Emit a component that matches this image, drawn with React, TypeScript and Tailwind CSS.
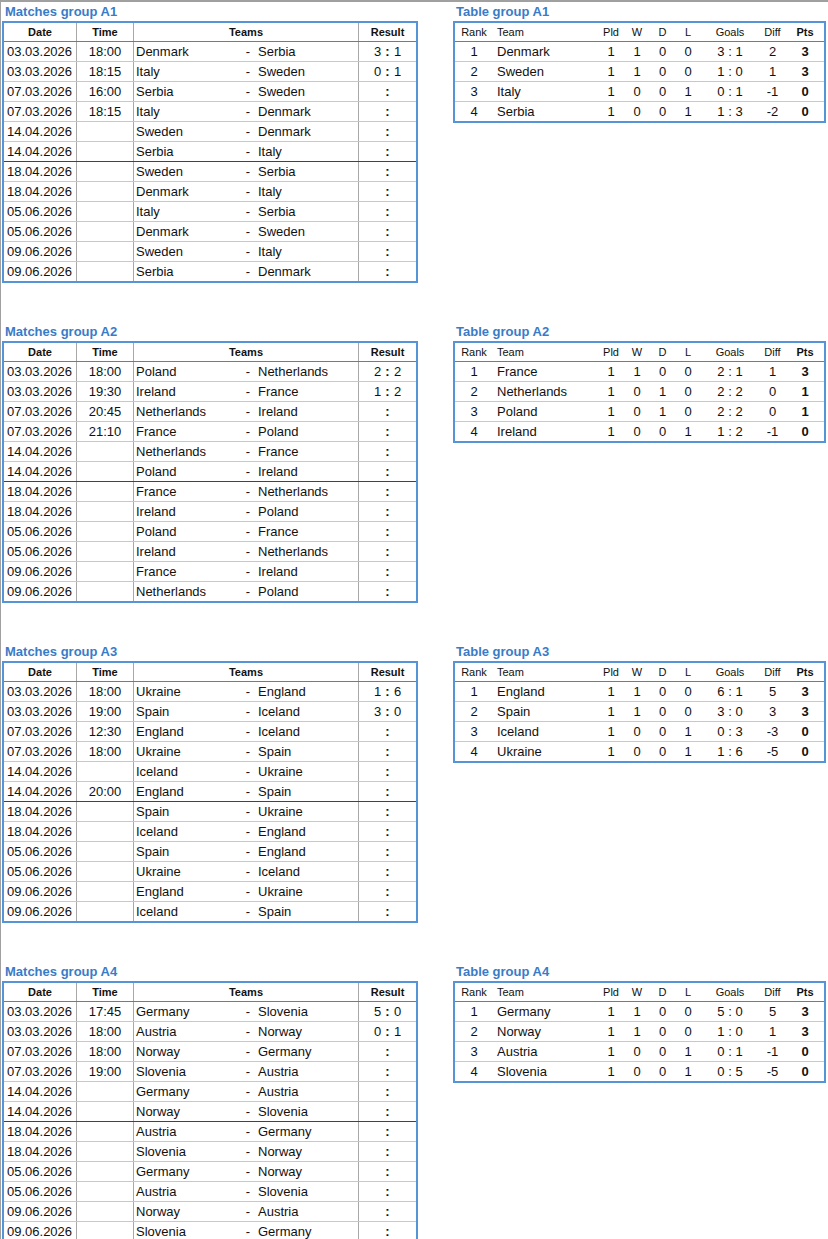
import React from "react";

type Match = [string, string, string, string, string];
type Standing = [number, string, number, number, number, number, string, number, number];

type Group = {
  name: string;
  matches: Match[];
  table: Standing[];
};

const groups: Group[] = [
  {
    name: "A1",
    matches: [
      ["03.03.2026", "18:00", "Denmark", "Serbia", "3:1"],
      ["03.03.2026", "18:15", "Italy", "Sweden", "0:1"],
      ["07.03.2026", "16:00", "Serbia", "Sweden", ""],
      ["07.03.2026", "18:15", "Italy", "Denmark", ""],
      ["14.04.2026", "", "Sweden", "Denmark", ""],
      ["14.04.2026", "", "Serbia", "Italy", ""],
      ["18.04.2026", "", "Sweden", "Serbia", ""],
      ["18.04.2026", "", "Denmark", "Italy", ""],
      ["05.06.2026", "", "Italy", "Serbia", ""],
      ["05.06.2026", "", "Denmark", "Sweden", ""],
      ["09.06.2026", "", "Sweden", "Italy", ""],
      ["09.06.2026", "", "Serbia", "Denmark", ""],
    ],
    table: [
      [1, "Denmark", 1, 1, 0, 0, "3 : 1", 2, 3],
      [2, "Sweden", 1, 1, 0, 0, "1 : 0", 1, 3],
      [3, "Italy", 1, 0, 0, 1, "0 : 1", -1, 0],
      [4, "Serbia", 1, 0, 0, 1, "1 : 3", -2, 0],
    ],
  },
  {
    name: "A2",
    matches: [
      ["03.03.2026", "18:00", "Poland", "Netherlands", "2:2"],
      ["03.03.2026", "19:30", "Ireland", "France", "1:2"],
      ["07.03.2026", "20:45", "Netherlands", "Ireland", ""],
      ["07.03.2026", "21:10", "France", "Poland", ""],
      ["14.04.2026", "", "Netherlands", "France", ""],
      ["14.04.2026", "", "Poland", "Ireland", ""],
      ["18.04.2026", "", "France", "Netherlands", ""],
      ["18.04.2026", "", "Ireland", "Poland", ""],
      ["05.06.2026", "", "Poland", "France", ""],
      ["05.06.2026", "", "Ireland", "Netherlands", ""],
      ["09.06.2026", "", "France", "Ireland", ""],
      ["09.06.2026", "", "Netherlands", "Poland", ""],
    ],
    table: [
      [1, "France", 1, 1, 0, 0, "2 : 1", 1, 3],
      [2, "Netherlands", 1, 0, 1, 0, "2 : 2", 0, 1],
      [3, "Poland", 1, 0, 1, 0, "2 : 2", 0, 1],
      [4, "Ireland", 1, 0, 0, 1, "1 : 2", -1, 0],
    ],
  },
  {
    name: "A3",
    matches: [
      ["03.03.2026", "18:00", "Ukraine", "England", "1:6"],
      ["03.03.2026", "19:00", "Spain", "Iceland", "3:0"],
      ["07.03.2026", "12:30", "England", "Iceland", ""],
      ["07.03.2026", "18:00", "Ukraine", "Spain", ""],
      ["14.04.2026", "", "Iceland", "Ukraine", ""],
      ["14.04.2026", "20:00", "England", "Spain", ""],
      ["18.04.2026", "", "Spain", "Ukraine", ""],
      ["18.04.2026", "", "Iceland", "England", ""],
      ["05.06.2026", "", "Spain", "England", ""],
      ["05.06.2026", "", "Ukraine", "Iceland", ""],
      ["09.06.2026", "", "England", "Ukraine", ""],
      ["09.06.2026", "", "Iceland", "Spain", ""],
    ],
    table: [
      [1, "England", 1, 1, 0, 0, "6 : 1", 5, 3],
      [2, "Spain", 1, 1, 0, 0, "3 : 0", 3, 3],
      [3, "Iceland", 1, 0, 0, 1, "0 : 3", -3, 0],
      [4, "Ukraine", 1, 0, 0, 1, "1 : 6", -5, 0],
    ],
  },
  {
    name: "A4",
    matches: [
      ["03.03.2026", "17:45", "Germany", "Slovenia", "5:0"],
      ["03.03.2026", "18:00", "Austria", "Norway", "0:1"],
      ["07.03.2026", "18:00", "Norway", "Germany", ""],
      ["07.03.2026", "19:00", "Slovenia", "Austria", ""],
      ["14.04.2026", "", "Germany", "Austria", ""],
      ["14.04.2026", "", "Norway", "Slovenia", ""],
      ["18.04.2026", "", "Austria", "Germany", ""],
      ["18.04.2026", "", "Slovenia", "Norway", ""],
      ["05.06.2026", "", "Germany", "Norway", ""],
      ["05.06.2026", "", "Austria", "Slovenia", ""],
      ["09.06.2026", "", "Norway", "Austria", ""],
      ["09.06.2026", "", "Slovenia", "Germany", ""],
    ],
    table: [
      [1, "Germany", 1, 1, 0, 0, "5 : 0", 5, 3],
      [2, "Norway", 1, 1, 0, 0, "1 : 0", 1, 3],
      [3, "Austria", 1, 0, 0, 1, "0 : 1", -1, 0],
      [4, "Slovenia", 1, 0, 0, 1, "0 : 5", -5, 0],
    ],
  },
];

function MatchRow({ m, border }: { m: Match; border: boolean }) {
  const [h, a] = m[4] ? m[4].split(":") : ["", ""];
  return (
    <div
      className={`grid grid-cols-[73px_57px_225px_57px] text-[13px] leading-[19px] ${
        border ? "h-5 border-b border-[#c8c8c8]" : "h-[19px]"
      }`}
    >
      <div className="border-r border-[#a8a8a8] pl-[3px]">{m[0]}</div>
      <div className="border-r border-[#a8a8a8] text-center">{m[1]}</div>
      <div className="flex border-r border-[#a8a8a8] pl-[2px]">
        <span className="w-[108px]">{m[2]}</span>
        <span className="w-[8px] text-center">-</span>
        <span className="ml-[6px]">{m[3]}</span>
      </div>
      <div className="flex justify-center">
        <span className="w-[14px] text-center">{h}</span>
        <span className="w-[6px] text-center font-bold">:</span>
        <span className="w-[14px] text-center">{a}</span>
      </div>
    </div>
  );
}

function Matches({ group }: { group: Group }) {
  const first = group.matches.slice(0, 6);
  const second = group.matches.slice(6);
  return (
    <div className="w-[416px] shrink-0">
      <div className="h-[19px] pl-[3px] text-[13px] font-bold leading-[19px] text-[#3a7bc8]">
        Matches group {group.name}
      </div>
      <div className="border-2 border-[#5594d6]">
        <div className="grid h-[19px] grid-cols-[73px_57px_225px_57px] border-b border-[#7a7a7a] text-[11px] font-bold leading-[18px]">
          <div className="border-r border-[#a8a8a8] text-center">Date</div>
          <div className="border-r border-[#a8a8a8] text-center">Time</div>
          <div className="border-r border-[#a8a8a8] text-center">Teams</div>
          <div className="text-center">Result</div>
        </div>
        {first.map((m, i) => (
          <MatchRow key={i} m={m} border={i < first.length - 1} />
        ))}
        <div className="h-px bg-[#e00000]" />
        {second.map((m, i) => (
          <MatchRow key={i} m={m} border={i < second.length - 1} />
        ))}
      </div>
    </div>
  );
}

const cols = "grid-cols-[38px_105px_26px_26px_25px_26px_58px_27px_38px]";

function Standings({ group }: { group: Group }) {
  return (
    <div className="w-[373px] shrink-0">
      <div className="h-[19px] pl-[3px] text-[13px] font-bold leading-[19px] text-[#3a7bc8]">
        Table group {group.name}
      </div>
      <div className="border-2 border-[#5594d6]">
        <div className={`grid ${cols} h-[19px] border-b border-[#7a7a7a] text-[11px] leading-[18px]`}>
          <div className="text-center">Rank</div>
          <div className="pl-[4px]">Team</div>
          <div className="text-center">Pld</div>
          <div className="text-center">W</div>
          <div className="text-center">D</div>
          <div className="text-center">L</div>
          <div className="text-center">Goals</div>
          <div className="text-center">Diff</div>
          <div className="text-center font-bold">Pts</div>
        </div>
        {group.table.map((r, i) => {
          const last = i === group.table.length - 1;
          return (
            <div
              key={i}
              className={`grid ${cols} text-[13px] leading-[20px] ${last ? "h-[19px]" : "h-5 border-b border-[#c8c8c8]"}`}
            >
              <div className="text-center">{r[0]}</div>
              <div className="pl-[4px]">{r[1]}</div>
              <div className="text-center">{r[2]}</div>
              <div className="text-center">{r[3]}</div>
              <div className="text-center">{r[4]}</div>
              <div className="text-center">{r[5]}</div>
              <div className="text-center">{r[6]}</div>
              <div className="text-center">{r[7]}</div>
              <div className="text-center font-bold">{r[8]}</div>
            </div>
          );
        })}
      </div>
    </div>
  );
}

export default function App() {
  return (
    <div
      className="min-h-[1239px] w-[828px] overflow-hidden border-l border-t-2 border-[#a0a0a0] bg-white pl-[1px] text-[#111]"
      style={{ fontFamily: '"Liberation Sans", Arial, sans-serif' }}
    >
      {groups.map((g) => (
        <div key={g.name} className="flex h-[320px] gap-[35px]">
          <Matches group={g} />
          <Standings group={g} />
        </div>
      ))}
    </div>
  );
}
